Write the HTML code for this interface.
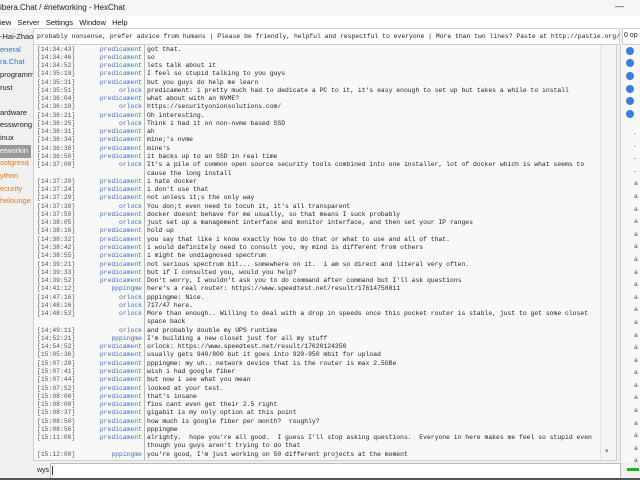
<!DOCTYPE html><html><head><style>
body{margin:0;width:640px;height:480px;overflow:hidden;background:#f0f0f0;font-family:"Liberation Sans",sans-serif;position:relative}
.a{position:absolute;white-space:pre}
.m{font-family:"Liberation Mono",monospace;font-size:6.4px}
#chat{position:absolute;left:33px;top:44px;width:582px;height:415px;background:#f8f8f6;border:1px solid #cfcfcf}
.r{position:absolute;left:0;height:8.27px;line-height:8.27px;font-family:"Liberation Mono",monospace;font-size:6.4px;color:#222;white-space:pre}
.t{position:absolute;left:3px;color:#555}
.n{position:absolute;right:458px;color:#3a6fc0;text-align:right}
.x{position:absolute;left:113px}
.ch{position:absolute;left:0;font-size:7.5px;color:#222}
.dot{position:absolute;left:626px;width:8px;height:8px;border-radius:50%;background:#3a7de0}
.ul{position:absolute;left:634px;font-size:6.5px;color:#555}
</style></head><body>
<div class="a" style="left:0;top:0;width:640px;height:16px;background:#f4f6f8"></div>
<div class="a" style="left:0;top:3px;font-size:8px;color:#222">ibera.Chat / #networking - HexChat</div>
<div class="a" style="left:615px;top:1px;font-size:9px;color:#333">—</div>
<div class="a" style="left:0;top:16px;width:640px;height:12px;background:#fff"></div>
<div class="a" style="left:0;top:18px;font-size:7.5px;color:#111">iew&nbsp;&nbsp; Server&nbsp;&nbsp; Settings&nbsp;&nbsp; Window&nbsp;&nbsp; Help</div>
<div class="a" style="left:33px;top:28px;width:585px;height:15px;background:#fff;border:1px solid #ccc"></div>
<div class="a m" style="left:37px;top:33px;color:#222">probably nonsense, prefer advice from humans | Please be friendly, helpful and respectful to everyone | More than two lines? Paste at http://pastie.org/</div>
<div class="a" style="left:622px;top:28px;width:18px;height:15px;background:#fff;border:1px solid #ccc"></div>
<div class="a" style="left:624px;top:32px;font-size:7px;color:#222">0 op</div>
<div class="a" style="left:620px;top:45px;width:20px;height:417px;background:#f8f8f6;border-left:1px solid #ccc"></div>
<div class="a" style="left:0;top:145px;width:31px;height:13px;background:#999"></div>
<div class="ch a" style="top:32px">-Hai-Zhao</div>
<div class="ch a" style="top:45px;color:#3a6fc0">eneral</div>
<div class="ch a" style="top:57px;color:#3a6fc0">ra.Chat</div>
<div class="ch a" style="top:70px">programm</div>
<div class="ch a" style="top:83px">rust</div>
<div class="ch a" style="top:108px">ardware</div>
<div class="ch a" style="top:120px">esswrong</div>
<div class="ch a" style="top:133px">inux</div>
<div class="ch a" style="top:146px;color:#fff">etworkin</div>
<div class="ch a" style="top:158px;color:#e07a20">ostgresq</div>
<div class="ch a" style="top:171px;color:#e07a20">ython</div>
<div class="ch a" style="top:184px;color:#e07a20">ecurity</div>
<div class="ch a" style="top:196px;color:#e07a20">helounge</div>
<div class="dot" style="top:47px"></div><div class="dot" style="top:59px"></div><div class="dot" style="top:72px"></div><div class="dot" style="top:85px"></div><div class="dot" style="top:97px"></div><div class="dot" style="top:110px"></div>
<div class="ul" style="top:128px;line-height:12.6px">-<br>-<br>-<br>-<br>a<br>a<br>a<br>a<br>a<br>a<br>a<br>a<br>a<br>a<br>a<br>a<br>a<br>a<br>a<br>a<br>a<br>a<br>a<br>a<br>a<br>a<br>a</div>
<div id="chat">
<div class="a" style="left:110px;top:0;width:1px;height:415px;background:#bbb"></div>
<div class="a" style="left:566px;top:0;width:15px;height:415px;background:#f4f4f4;border-left:1px solid #e4e4e4"></div>
<div class="a" style="left:571px;top:402px;font-size:7px;color:#888">▾</div>
<div id="rows"></div>
</div>
<div class="a" style="left:37px;top:467px;font-size:7px;color:#222">wys</div>
<div class="a" style="left:50px;top:463px;width:569px;height:14px;background:#fff;border:1px solid #bbb"></div>
<div class="a" style="left:52px;top:466px;width:1px;height:9px;background:#333"></div>
<div class="a" style="left:627px;top:468px;width:12px;height:3px;background:#1ab31a"></div>
<div class="a" style="left:0;top:478px;width:640px;height:2px;background:#555"></div>
<script>
var d=[["14:34:43","predicament","got that."],["14:34:46","predicament","so"],["14:34:52","predicament","lets talk about it"],["14:35:19","predicament","I feel so stupid talking to you guys"],["14:35:31","predicament","but you guys do help me learn"],["14:35:51","orlock","predicament: i pretty much had to dedicate a PC to it, it's easy enough to set up but takes a while to install"],["14:36:04","predicament","what about with an NVME?"],["14:36:10","orlock","https://securityonionsolutions.com/"],["14:36:21","predicament","Oh interesting."],["14:36:25","orlock","Think i had it on non-nvme based SSD"],["14:36:31","predicament","ah"],["14:36:34","predicament","mine;'s nvme"],["14:36:38","predicament","mine's"],["14:36:50","predicament","it backs up to an SSD in real time"],["14:37:08","orlock","It's a pile of common open source security tools combined into one installer, lot of docker which is what seems to"],["","","cause the long install"],["14:37:20","predicament","i hate docker"],["14:37:24","predicament","i don't use that"],["14:37:29","predicament","not unless it;s the only way"],["14:37:30","orlock","You don;t even need to tocuh it, it's all transparent"],["14:37:59","predicament","docker doesnt behave for me usually, so that means I suck probably"],["14:38:05","orlock","just set up a management interface and monitor interface, and then set your IP ranges"],["14:38:16","predicament","hold up"],["14:38:32","predicament","you say that like i know exactly how to do that or what to use and all of that."],["14:38:42","predicament","i would definitely need to consult you, my mind is different from others"],["14:38:55","predicament","i might be undiagnosed spectrum"],["14:39:21","predicament","not serious spectrum bit... somewhere on it.  i am so direct and literal very often."],["14:39:33","predicament","but if I consulted you, would you help?"],["14:39:52","predicament","Don't worry, I wouldn't ask you to do command after command but I'll ask questions"],["14:41:12","pppingme","here's a real router: https://www.speedtest.net/result/17614758811"],["14:47:16","orlock","pppingme: Nice."],["14:48:16","orlock","717/47 here."],["14:48:53","orlock","More than enough.. Willing to deal with a drop in speeds once this pocket router is stable, just to get some closet"],["","","space back"],["14:49:11","orlock","and probably double my UPS runtime"],["14:52:21","pppingme","I'm building a new closet just for all my stuff"],["14:54:52","predicament","orlock: https://www.speedtest.net/result/17620124350"],["15:05:36","predicament","usually gets 940/800 but it goes into 920-950 mbit for upload"],["15:07:20","predicament","pppingme: my uh.. network device that is the router is max 2.5GBe"],["15:07:41","predicament","wish i had google fiber"],["15:07:44","predicament","but now i see what you mean"],["15:07:52","predicament","looked at your test."],["15:08:00","predicament","that's insane"],["15:08:08","predicament","fios cant even get their 2.5 right"],["15:08:37","predicament","gigabit is my only option at this point"],["15:08:50","predicament","how much is google fiber per month?  roughly?"],["15:08:56","predicament","pppingme"],["15:11:08","predicament","alrighty.  hope you're all good.  I guess I'll stop asking questions.  Everyone in here makes me feel so stupid even"],["","","though you guys aren't trying to do that"],["15:12:08","pppingme","you're good, I'm just working on 50 different projects at the moment"]];
var h="";d.forEach(function(r,i){h+='<div class="r" style="top:'+(0.5+i*8.27)+'px;width:566px">'+(r[0]?'<span class="t">['+r[0]+']</span>':'')+'<span class="n">'+r[1]+'</span><span class="x">'+r[2].replace(/</g,"&lt;")+'</span></div>';});
document.getElementById("rows").innerHTML=h;
</script>
</body></html>
